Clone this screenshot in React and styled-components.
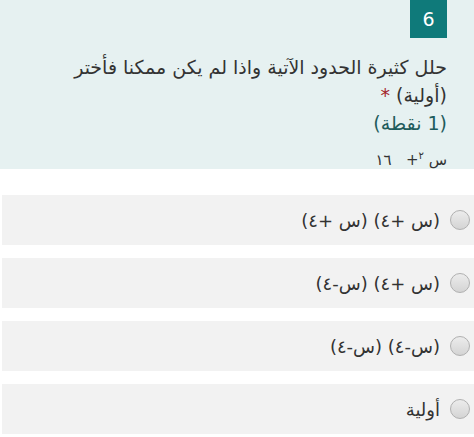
import React from "react";
import styled, { createGlobalStyle } from "styled-components";

const GlobalStyle = createGlobalStyle`
  html, body {
    margin: 0;
    padding: 0;
    background: #ffffff;
  }
  body {
    font-family: "Segoe UI", "DejaVu Sans", "Noto Sans", sans-serif;
  }
`;

export const Page = styled.div`
  direction: rtl;
  width: 474px;
  height: 437px;
  overflow: hidden;
  background: #ffffff;
`;

export const QuestionCard = styled.div`
  margin-top: 2px;
  height: 169px;
  box-sizing: border-box;
  padding: 0 27px 0 20px;
  background-color: #e6f1f1;
`;

export const Badge = styled.div`
  width: 37px;
  height: 38px;
  margin-top: -2px;
  background-color: #0f7a7a;
  color: #ffffff;
  font-size: 19px;
  display: flex;
  align-items: center;
  justify-content: center;
`;

export const Title = styled.div`
  margin-top: 15px;
  font-size: 19px;
  line-height: 28px;
  color: #333333;

  & > .required {
    color: #a4262c;
  }
  & > .points {
    display: block;
    color: #1f5c5c;
  }
`;

export const Formula = styled.div`
  margin-top: 8px;
  font-size: 15px;
  line-height: 22px;
  color: #333333;

  & sup {
    font-size: 10px;
    vertical-align: 6px;
  }
`;

export const OptionList = styled.div`
  margin-top: 26px;
  display: flex;
  flex-direction: column;
  gap: 13px;
`;

export const Option = styled.label`
  display: flex;
  align-items: center;
  gap: 10px;
  height: 50px;
  margin-left: 2px;
  padding-right: 4px;
  background-color: #f2f2f2;
  font-size: 18px;
  color: #333333;
  cursor: pointer;
`;

export const Radio = styled.span`
  width: 20px;
  height: 20px;
  border-radius: 50%;
  box-sizing: border-box;
  border: 1px solid #b0b0b0;
  background: linear-gradient(#ececec, #d4d4d4);
  flex-shrink: 0;
`;

const options = [
  "(س +٤) (س +٤)",
  "(س +٤) (س-٤)",
  "(س-٤) (س-٤)",
  "أولية",
];

function App() {
  return (
    <Page>
      <GlobalStyle />
      <QuestionCard>
        <Badge>6</Badge>
        <Title>
          حلل كثيرة الحدود الآتية واذا لم يكن ممكنا فأختر (أولية){" "}
          <span className="required">*</span>
          <span className="points">(1 نقطة)</span>
        </Title>
        <Formula>
          س <sup>٢</sup>+&nbsp;&nbsp; ١٦
        </Formula>
      </QuestionCard>
      <OptionList>
        {options.map((text) => (
          <Option key={text}>
            <Radio />
            <span>{text}</span>
          </Option>
        ))}
      </OptionList>
    </Page>
  );
}

export default App;
